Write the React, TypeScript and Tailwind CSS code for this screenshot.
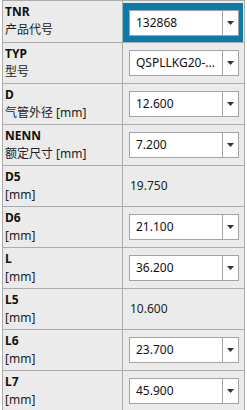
const FONT = '"Noto Sans", "Noto Sans CJK SC", sans-serif';

type Row = {
  code: string;
  name: string;
  value: string;
  select?: boolean;
  active?: boolean;
};

const rows: Row[] = [
  { code: 'TNR', name: '产品代号', value: '132868', select: true, active: true },
  { code: 'TYP', name: '型号', value: 'QSPLLKG20-...', select: true },
  { code: 'D', name: '气管外径 [mm]', value: '12.600', select: true },
  { code: 'NENN', name: '额定尺寸 [mm]', value: '7.200', select: true },
  { code: 'D5', name: '[mm]', value: '19.750' },
  { code: 'D6', name: '[mm]', value: '21.100', select: true },
  { code: 'L', name: '[mm]', value: '36.200', select: true },
  { code: 'L5', name: '[mm]', value: '10.600' },
  { code: 'L6', name: '[mm]', value: '23.700', select: true },
  { code: 'L7', name: '[mm]', value: '45.900', select: true },
];

function Dropdown({ value }: { value: string }) {
  return (
    <div className="flex h-[26px] w-[110px] items-stretch border border-[#a3a3a3] bg-white">
      <div className="flex min-w-0 flex-1 items-center pl-[6px] pr-[1px] text-[12px] text-[#111]">
        <span className="overflow-hidden whitespace-nowrap">{value}</span>
      </div>
      <div className="flex w-[16px] shrink-0 items-center justify-center border-l border-[#a3a3a3]">
        <svg width="7" height="4" viewBox="0 0 7 4">
          <path d="M0 0h7L3.5 4z" fill="#333" />
        </svg>
      </div>
    </div>
  );
}

function PropertyRow({ row, first }: { row: Row; first: boolean }) {
  return (
    <div className={`flex border-b border-[#ababab] ${first ? 'h-[42px]' : 'h-[41px]'}`}>
      <div className="w-[120px] shrink-0 border-r border-[#ababab] pl-[2px] pt-[2px] leading-[18px]">
        <div className="text-[12px] font-bold text-[#111]">{row.code}</div>
        <div className="whitespace-nowrap text-[12px] text-[#222]">{row.name}</div>
      </div>
      <div className={`flex w-[120px] shrink-0 items-center ${row.active ? 'mt-[2px] bg-[#0b7bab]' : ''}`}>
        {row.select ? (
          <div className="pl-[6px]">
            <Dropdown value={row.value} />
          </div>
        ) : (
          <span className="pl-[7px] text-[12px] text-[#222]">{row.value}</span>
        )}
      </div>
    </div>
  );
}

export default function App() {
  return (
    <div className="h-[410px] w-[247px] overflow-hidden bg-white" style={{ fontFamily: FONT }}>
      <div className="ml-[2px] w-[243px] border-x border-t border-[#ababab] bg-[#ebebeb]">
        {rows.map((row, i) => (
          <PropertyRow key={row.code} row={row} first={i === 0} />
        ))}
      </div>
    </div>
  );
}
